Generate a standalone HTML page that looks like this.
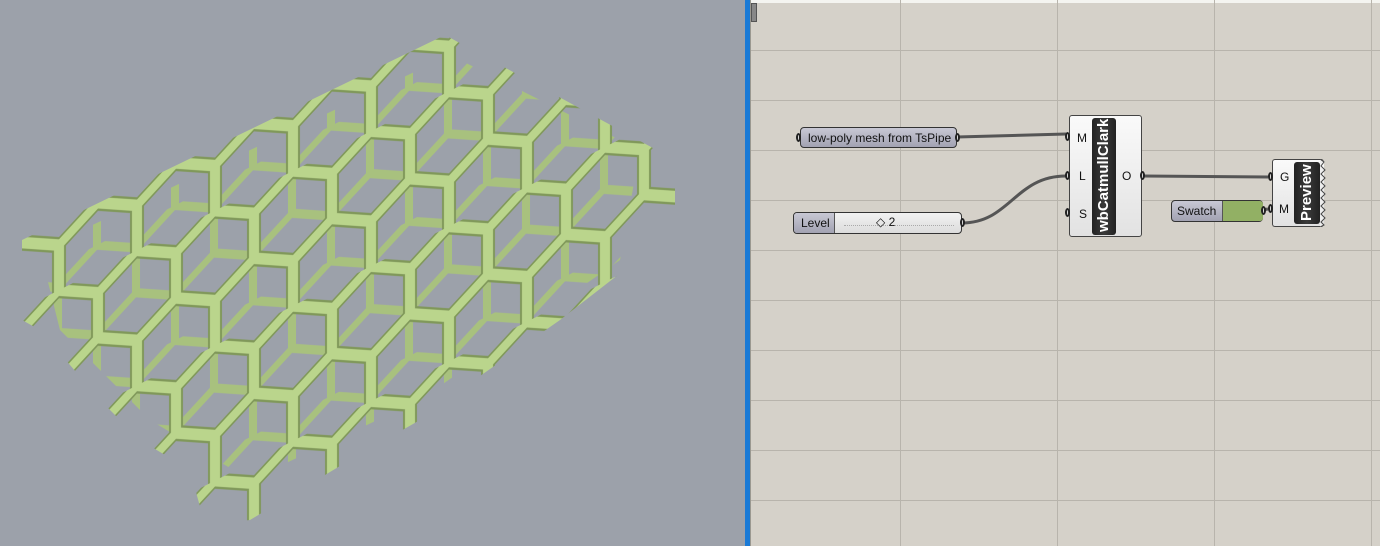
<!DOCTYPE html>
<html><head><meta charset="utf-8">
<style>
html,body{margin:0;width:1380px;height:546px;overflow:hidden}
body{position:relative;background:#d4d0c8;font-family:"Liberation Sans",sans-serif}
#vp{position:absolute;left:0;top:0;width:745px;height:546px;background:#9ca1aa}
#blue{position:absolute;left:745px;top:0;width:5px;height:546px;background:#1a7ad6}
#sep{position:absolute;left:750px;top:0;width:1px;height:546px;background:#9a9890}
#canvas{position:absolute;left:751px;top:0;width:629px;height:546px;background:#d5d1c9}
.hl{position:absolute;left:751px;width:629px;height:1px;background:#b8b4ac}
.vl{position:absolute;top:0;width:1px;height:546px;background:#b8b4ac}
.panel{position:absolute;border:1px solid #333;border-radius:4px;box-sizing:border-box;font-size:12px;color:#111}
.grip{position:absolute;width:5px;height:9px;border:2px solid #222;border-radius:50%;background:#ddd;box-sizing:border-box}
.comp{position:absolute;border:1px solid #444;border-radius:3px;box-sizing:border-box;background:linear-gradient(#fafafa,#e2e2e2)}
.band{position:absolute;background:linear-gradient(90deg,#222,#3a3a3a,#222);border-radius:3px}
.vt{position:absolute;color:#fff;font-weight:bold;white-space:nowrap;transform:rotate(-90deg);transform-origin:left top}
.pl{position:absolute;font-size:12px;color:#111}
</style></head><body>
<div id="vp">
<svg width="745" height="546" viewBox="0 0 745 546">
<defs>
<pattern id="hx" width="78" height="135" patternUnits="userSpaceOnUse" patternTransform="translate(20,40) skewY(-27)">
<path d="M39,0 L78,22.5 L78,67.5 L39,90 L0,67.5 L0,22.5 Z M39,90 L39,135" fill="none" stroke="#80985a" stroke-width="14" stroke-linejoin="round"/>
<path d="M39,0 L78,22.5 L78,67.5 L39,90 L0,67.5 L0,22.5 Z M39,90 L39,135" fill="none" stroke="#bad58c" stroke-width="10" stroke-linejoin="round"/>
</pattern>
<pattern id="hx2" width="78" height="135" patternUnits="userSpaceOnUse" patternTransform="translate(58,-5) skewY(-27)">
<path d="M39,0 L78,22.5 L78,67.5 L39,90 L0,67.5 L0,22.5 Z M39,90 L39,135" fill="none" stroke="#a8c17e" stroke-width="8" stroke-linejoin="round"/>
</pattern>
<clipPath id="cp"><polygon points="22,240 445,35 675,160 675,240 650,250 560,320 460,390 420,420 350,460 250,520 205,525 190,470 140,440 100,400 40,330 22,320"/></clipPath>
<clipPath id="cp2"><polygon points="40,250 450,55 640,150 620,260 420,400 250,480 150,420 60,330"/></clipPath>
</defs>
<rect x="0" y="0" width="745" height="546" fill="url(#hx2)" clip-path="url(#cp2)"/>
<rect x="0" y="0" width="745" height="546" fill="url(#hx)" clip-path="url(#cp)"/>
</svg>
</div>
<div id="blue"></div><div id="sep"></div>
<div id="canvas"></div>
<div style="position:absolute;left:751px;top:0;width:629px;height:3px;background:#f4f4f0"></div>
<div style="position:absolute;left:751px;top:3px;width:4px;height:17px;background:#888;border:1px solid #555"></div>
<div class="hl" style="top:50px"></div><div class="hl" style="top:100px"></div><div class="hl" style="top:150px"></div><div class="hl" style="top:200px"></div><div class="hl" style="top:250px"></div><div class="hl" style="top:300px"></div><div class="hl" style="top:350px"></div><div class="hl" style="top:400px"></div><div class="hl" style="top:450px"></div><div class="hl" style="top:500px"></div>
<div class="vl" style="left:900px"></div><div class="vl" style="left:1057px"></div><div class="vl" style="left:1214px"></div><div class="vl" style="left:1371px"></div>

<svg style="position:absolute;left:0;top:0" width="1380" height="546">
<path d="M957,137 L1066,134" stroke="#555" stroke-width="3" fill="none"/>
<path d="M962,223 C1010,223 1015,176 1066,176" stroke="#555" stroke-width="3" fill="none"/>
<path d="M1143,176 L1268,177" stroke="#555" stroke-width="3" fill="none"/>
<path d="M1262,210 L1268,209" stroke="#555" stroke-width="3" fill="none"/>
</svg>

<div class="panel" style="left:800px;top:127px;width:157px;height:21px;background:linear-gradient(#c8c8d4,#a2a2b2)"><span style="position:absolute;left:7px;top:3px">low-poly mesh from TsPipe</span></div>
<div class="grip" style="left:796px;top:133px"></div><div class="grip" style="left:955px;top:133px"></div>

<div class="panel" style="left:793px;top:212px;width:169px;height:22px;background:linear-gradient(#f2f2f2,#dcdcdc)">
<div style="position:absolute;left:0;top:0;width:40px;height:20px;background:linear-gradient(#c8c8d4,#a2a2b2);border-right:1px solid #555;border-radius:3px 0 0 3px"></div>
<span style="position:absolute;left:7px;top:3px">Level</span>
<div style="position:absolute;left:50px;top:12px;width:110px;height:0;border-top:1px dotted #aaa"></div>
<span style="position:absolute;left:82px;top:2px;font-size:12px">◇ 2</span></div>
<div class="grip" style="left:960px;top:218px"></div>

<div class="comp" style="left:1069px;top:115px;width:73px;height:122px"></div>
<div class="band" style="left:1092px;top:118px;width:24px;height:117px"></div>
<div class="vt" style="left:1094px;top:232px;font-size:15px;line-height:20px">wbCatmullClark</div>
<div class="pl" style="left:1077px;top:131px">M</div><div class="pl" style="left:1079px;top:169px">L</div><div class="pl" style="left:1079px;top:207px">S</div><div class="pl" style="left:1122px;top:169px">O</div>
<div class="grip" style="left:1065px;top:132px"></div><div class="grip" style="left:1065px;top:171px"></div><div class="grip" style="left:1065px;top:208px"></div><div class="grip" style="left:1140px;top:171px"></div>

<div class="panel" style="left:1171px;top:200px;width:92px;height:22px;background:linear-gradient(#c8c8d4,#a2a2b2)">
<div style="position:absolute;left:50px;top:0;width:40px;height:20px;background:#92b064;border-left:1px solid #555;border-radius:0 3px 3px 0"></div>
<span style="position:absolute;left:5px;top:3px">Swatch</span></div>
<div class="grip" style="left:1261px;top:206px"></div>

<div class="comp" style="left:1272px;top:159px;width:52px;height:68px;border-right:none"></div>
<svg style="position:absolute;left:1320px;top:159px" width="8" height="68"><path d="M0,0 L4,3 L1,7 L5,11 L1,15 L5,19 L1,23 L5,27 L1,31 L5,35 L1,39 L5,43 L1,47 L5,51 L1,55 L5,59 L1,63 L4,66 L0,68" fill="#eee" stroke="#444" stroke-width="1"/></svg>
<div class="band" style="left:1294px;top:162px;width:26px;height:62px"></div>
<div class="vt" style="left:1297px;top:221px;font-size:15px;line-height:20px">Preview</div>
<div class="pl" style="left:1280px;top:170px">G</div><div class="pl" style="left:1279px;top:202px">M</div>
<div class="grip" style="left:1268px;top:172px"></div><div class="grip" style="left:1268px;top:204px"></div>
</body></html>
